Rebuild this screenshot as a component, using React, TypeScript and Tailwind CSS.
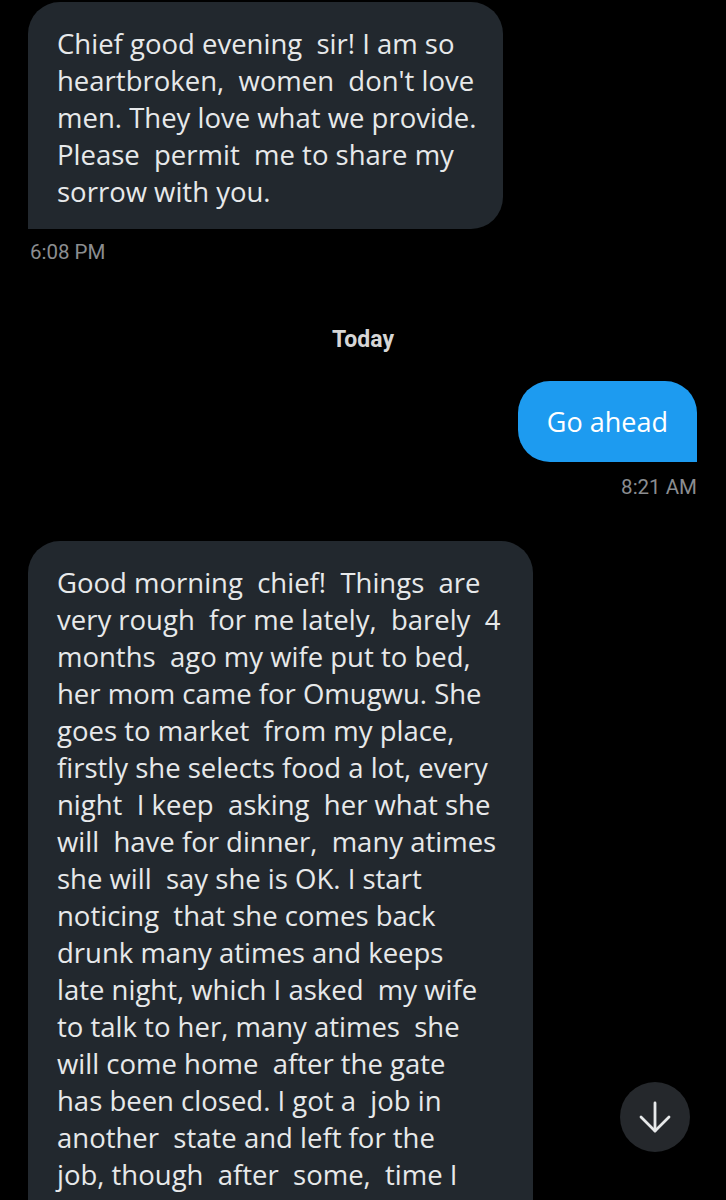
import { ArrowDown } from "lucide-react";

const first = [
  "Chief good evening  sir! I am so",
  "heartbroken,  women  don't love",
  "men. They love what we provide.",
  "Please  permit  me to share my",
  "sorrow with you.",
];

const story = [
  "Good morning  chief!  Things  are",
  "very rough  for me lately,  barely  4",
  "months  ago my wife put to bed,",
  "her mom came for Omugwu. She",
  "goes to market  from my place,",
  "firstly she selects food a lot, every",
  "night  I keep  asking  her what she",
  "will  have for dinner,  many atimes",
  "she will  say she is OK. I start",
  "noticing  that she comes back",
  "drunk many atimes and keeps",
  "late night, which I asked  my wife",
  "to talk to her, many atimes  she",
  "will come home  after the gate",
  "has been closed. I got a  job in",
  "another  state and left for the",
  "job, though  after  some,  time I",
];

function Lines({ lines }: { lines: string[] }) {
  return (
    <>
      {lines.map((l, i) => (
        <div key={i} className="whitespace-pre">
          {l}
        </div>
      ))}
    </>
  );
}

export default function App() {
  return (
    <div
      className="relative h-[1200px] w-[726px] overflow-hidden bg-black text-[#e7e9ea]"
      style={{ fontFamily: "'Open Sans', 'Noto Sans', sans-serif" }}
    >
      <div className="flex flex-col pt-[2px]">
        {/* received */}
        <div className="ml-[28px] w-[475px] rounded-[32px] rounded-bl-none bg-[#22282e] px-[29px] pt-[23px] pb-[19px] text-[27.5px] leading-[37px]">
          <Lines lines={first} />
        </div>
        <div className="ml-[30px] mt-[10px] font-['Roboto',sans-serif] text-[20.5px] leading-[26px] text-[#8b8d90]">
          6:08 PM
        </div>

        {/* day divider */}
        <div className="mt-[60px] text-center font-['Roboto',sans-serif] text-[23px] font-bold leading-[30px] text-[#d6d6d6]">
          Today
        </div>

        {/* sent */}
        <div className="mt-[26px] mr-[29px] self-end rounded-[32px] rounded-br-none bg-[#1d9bf0] px-[29px] py-[22px] text-[27px] leading-[37px] text-white">
          Go ahead
        </div>
        <div className="mr-[29px] mt-[12px] self-end font-['Roboto',sans-serif] text-[20.5px] leading-[26px] text-[#8b8d90]">
          8:21 AM
        </div>

        {/* received long */}
        <div className="ml-[28px] mt-[41px] w-[505px] rounded-t-[32px] bg-[#22282e] px-[29px] pt-[23px] pb-[19px] text-[27.5px] leading-[37px]">
          <Lines lines={story} />
        </div>
      </div>

      {/* scroll to bottom */}
      <button className="absolute left-[620px] top-[1082px] flex h-[70px] w-[70px] items-center justify-center rounded-full bg-[#25282c] text-[#e7e9ea]">
        <ArrowDown className="h-[48px] w-[48px]" strokeWidth={1.4} />
      </button>
    </div>
  );
}
